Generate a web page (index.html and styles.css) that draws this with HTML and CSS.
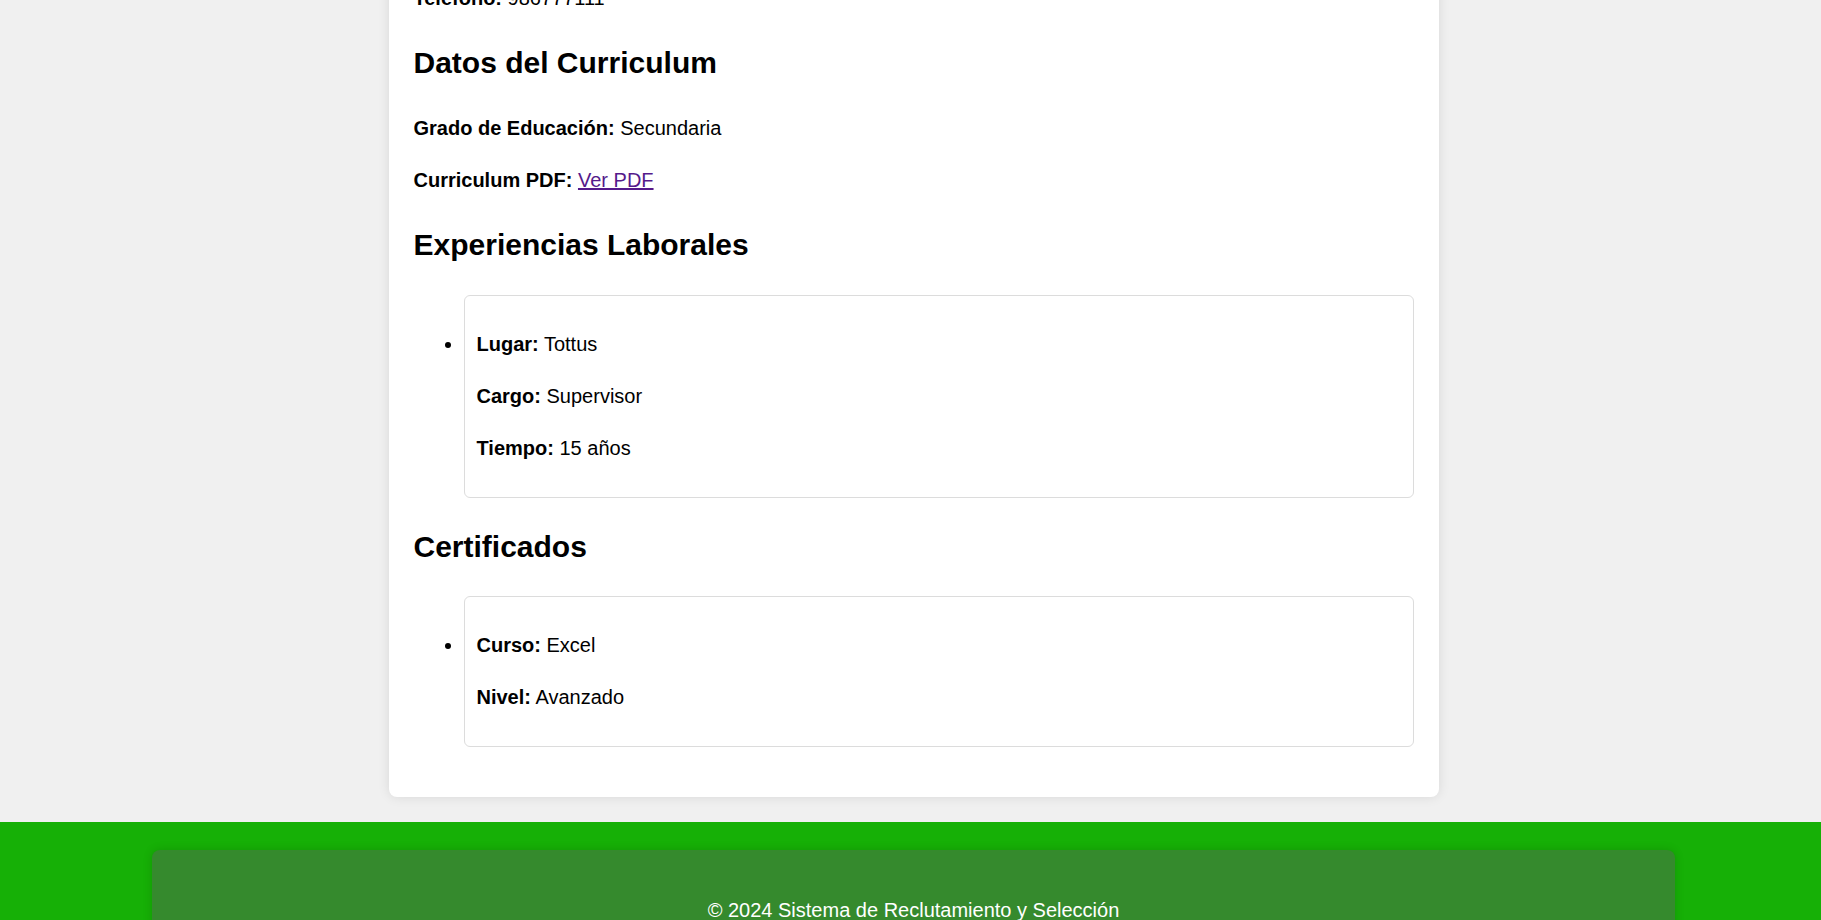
FILE: index.html
```html
<!DOCTYPE html>
<html lang="es">
<head>
<meta charset="utf-8">
<title>Detalle del Postulante</title>
<link rel="stylesheet" href="styles.css">
</head>
<body>
<main class="page-main">
  <section class="card">
    <p><strong>Teléfono:</strong> 986777111</p>

    <h2>Datos del Curriculum</h2>
    <p><strong>Grado de Educación:</strong> Secundaria</p>
    <p><strong>Curriculum PDF:</strong> <a class="pdf-link" href="#">Ver PDF</a></p>

    <h2>Experiencias Laborales</h2>
    <ul class="item-list">
      <li class="item-box">
        <p><strong>Lugar:</strong> Tottus</p>
        <p><strong>Cargo:</strong> Supervisor</p>
        <p><strong>Tiempo:</strong> 15 años</p>
      </li>
    </ul>

    <h2>Certificados</h2>
    <ul class="item-list last">
      <li class="item-box">
        <p><strong>Curso:</strong> Excel</p>
        <p><strong>Nivel:</strong> Avanzado</p>
      </li>
    </ul>
  </section>
</main>
<footer class="footer-band">
  <div class="footer-inner">
    <p>© 2024 Sistema de Reclutamiento y Selección</p>
  </div>
</footer>
</body>
</html>
```

FILE: styles.css
```css
html, body {
  margin: 0;
  padding: 0;
}

body {
  background: #f0f0f0;
  color: #000;
  font-family: "Liberation Sans", Arial, sans-serif;
  font-size: 20px;
  line-height: 1.6;
}

.page-main {
  padding-left: 6px;
  margin-top: -43px;
}

.card {
  width: 1050px;
  box-sizing: border-box;
  margin: 0 auto;
  background: #fff;
  border-radius: 8px;
  padding: 25px;
  box-shadow: 0 0 12px rgba(0, 0, 0, 0.1);
}

.card > p:first-child {
  margin-top: 0;
}

p {
  margin: 20px 0;
}

h2 {
  font-size: 30px;
  font-weight: bold;
  line-height: 1.6;
  margin: 25px 0;
}

.pdf-link {
  color: #551a8b;
  text-decoration: underline;
}

.item-list {
  margin: 26px 0 20px;
  padding-left: 50px;
  list-style: disc outside;
}

.item-list.last {
  margin-top: 25px;
  margin-bottom: 25px;
}

.item-box {
  border: 1px solid #dcdcdc;
  border-radius: 6px;
  padding: 12px 12px 13px;
}

.footer-band {
  margin-top: 25px;
  background: #16b006;
  padding: 28px 0 40px 6px;
}

.footer-inner {
  width: 1523px;
  margin: 0 auto;
  background: #358a2d;
  border-radius: 8px;
  box-shadow: 0 0 10px rgba(0, 0, 0, 0.15);
  padding: 24px 0 25px;
  color: #fff;
  text-align: center;
}
```
